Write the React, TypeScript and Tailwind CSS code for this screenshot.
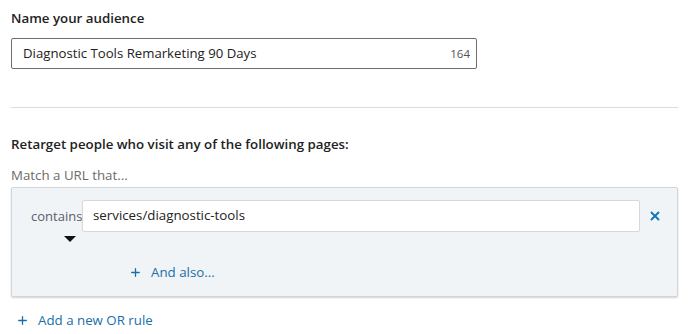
import { X, Plus } from 'lucide-react';

export default function App() {
  return (
    <div
      className="w-[696px] h-[334px] bg-white text-[#222] overflow-hidden"
      style={{ fontFamily: '"Open Sans", "Noto Sans", sans-serif' }}
    >
      <div className="pl-[11px] pr-[18px] pt-[8px]">
        <h3 className="text-[13.3px] font-semibold leading-[20px]">Name your audience</h3>

        <div className="mt-[10px] w-[466px] h-[31px] border border-[#6e6e6e] rounded-[2px] flex items-center pl-[11px] pr-[6px]">
          <span className="flex-1 text-[13.2px]">Diagnostic Tools Remarketing 90 Days</span>
          <span className="text-[11.5px] text-[#555]">164</span>
        </div>

        <div className="mt-[38px] border-t border-[#dcdcdc]" />

        <h3 className="mt-[26px] text-[13.3px] font-semibold leading-[20px]">
          Retarget people who visit any of the following pages:
        </h3>
        <p className="mt-[11px] text-[13.3px] text-[#6b6b6b] leading-[20px]">Match a URL that...</p>

        {/* rule group */}
        <div className="mt-[2px] bg-[#f1f4f7] border border-[#d2d6da] rounded-[2px] shadow-[0_1px_2px_rgba(0,0,0,0.18)] h-[110px] pt-[12px] pl-[19px] pr-[7px]">
          <div className="flex items-start">
            <div className="flex flex-col w-[51px]">
              <span className="text-[13px] text-[#58606a] leading-[32px]">contains</span>
              <span className="mt-[4px] ml-[33px] w-0 h-0 border-l-[6px] border-r-[6px] border-t-[6px] border-l-transparent border-r-transparent border-t-[#111]" />
            </div>
            <div className="flex-1 h-[32px] bg-white border border-[#d8d8d8] rounded-[2px] flex items-center pl-[10px] text-[13.3px]">
              services/diagnostic-tools
            </div>
            <button className="w-[30px] h-[32px] flex items-center justify-center text-[#1277b5]">
              <X size={14} strokeWidth={3.2} />
            </button>
          </div>
          <div className="mt-[21px] pl-[98px] flex items-center gap-[9px] text-[13.3px] text-[#1a6fa8] font-medium">
            <Plus size={13} strokeWidth={2.4} />
            <span>And also...</span>
          </div>
        </div>

        <div className="mt-[14px] pl-[5px] flex items-center gap-[9px] text-[13.3px] text-[#1a6fa8] font-medium">
          <Plus size={13} strokeWidth={2.4} />
          <span>Add a new OR rule</span>
        </div>
      </div>
    </div>
  );
}
